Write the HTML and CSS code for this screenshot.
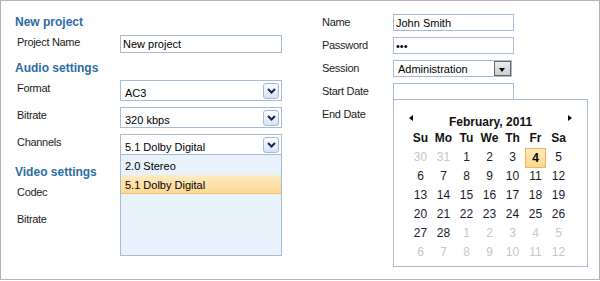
FILE: index.html
```html
<!DOCTYPE html>
<html lang="en">
<head>
    <meta charset="UTF-8">
    <title>New project</title>
    <link rel="stylesheet" href="styles.css">
</head>
<body>
    <div class="frame">
        <div class="form-left">
            <h2 class="group-title first">New project</h2>
            <div class="field field-input">
                <label for="projectName">Project Name</label>
                <input type="text" id="projectName" class="text-box" value="New project">
            </div>

            <h2 class="group-title audio">Audio settings</h2>
            <div class="field field-select">
                <label>Format</label>
                <div class="combo">AC3
                    <span class="combo-btn"><svg width="9" height="6" viewBox="0 0 9 6"><polyline points="1,1 4.5,4.5 8,1" fill="none" stroke="#1b2550" stroke-width="2"/></svg></span>
                </div>
            </div>
            <div class="field field-select">
                <label>Bitrate</label>
                <div class="combo">320 kbps
                    <span class="combo-btn"><svg width="9" height="6" viewBox="0 0 9 6"><polyline points="1,1 4.5,4.5 8,1" fill="none" stroke="#1b2550" stroke-width="2"/></svg></span>
                </div>
            </div>
            <div class="field field-select">
                <label>Channels</label>
                <div class="combo">5.1 Dolby Digital
                    <span class="combo-btn"><svg width="9" height="6" viewBox="0 0 9 6"><polyline points="1,1 4.5,4.5 8,1" fill="none" stroke="#1b2550" stroke-width="2"/></svg></span>
                    <ul class="combo-list">
                        <li>2.0 Stereo</li>
                        <li class="selected">5.1 Dolby Digital</li>
                    </ul>
                </div>
            </div>

            <h2 class="group-title video">Video settings</h2>
            <div class="field field-plain"><label>Codec</label></div>
            <div class="field field-plain"><label>Bitrate</label></div>
        </div>

        <div class="form-right">
            <div class="field field-small">
                <label for="name">Name</label>
                <input type="text" id="name" class="text-box small" value="John Smith">
            </div>
            <div class="field field-small">
                <label for="password">Password</label>
                <input type="password" id="password" class="text-box small" value="abc">
            </div>
            <div class="field field-small">
                <label>Session</label>
                <div class="combo-classic">Administration
                    <span class="classic-btn"><span class="arrow-down"></span></span>
                </div>
            </div>
            <div class="field field-small">
                <label for="startDate">Start Date</label>
                <input type="text" id="startDate" class="text-box small" value="">

                <div class="calendar">
                    <div class="cal-head">
                        <span class="arrow-left"></span>
                        <span class="cal-title">February, 2011</span>
                        <span class="arrow-right"></span>
                    </div>
                    <div class="cal-grid">
                        <b>Su</b><b>Mo</b><b>Tu</b><b>We</b><b>Th</b><b>Fr</b><b>Sa</b>
                        <span class="other">30</span><span class="other">31</span><span>1</span><span>2</span><span>3</span><span class="today">4</span><span>5</span>
                        <span>6</span><span>7</span><span>8</span><span>9</span><span>10</span><span>11</span><span>12</span>
                        <span>13</span><span>14</span><span>15</span><span>16</span><span>17</span><span>18</span><span>19</span>
                        <span>20</span><span>21</span><span>22</span><span>23</span><span>24</span><span>25</span><span>26</span>
                        <span>27</span><span>28</span><span class="other">1</span><span class="other">2</span><span class="other">3</span><span class="other">4</span><span class="other">5</span>
                        <span class="other">6</span><span class="other">7</span><span class="other">8</span><span class="other">9</span><span class="other">10</span><span class="other">11</span><span class="other">12</span>
                    </div>
                </div>
            </div>
            <div class="field field-small">
                <label>End Date</label>
            </div>
        </div>
    </div>
</body>
</html>
```

FILE: styles.css
```css
body {
    margin: 0;
    font-family: "Liberation Sans", Arial, sans-serif;
    font-size: 11px;
    color: #1c1c1c;
    background: #fff;
}
.frame {
    display: flex;
    width: 600px;
    height: 280px;
    box-sizing: border-box;
    border: 1px solid #b4b4b4;
    background: #fff;
}
.form-left {
    width: 267px;
    padding: 13px 0 0 14px;
}
.form-right {
    width: 192px;
    margin-left: 40px;
    padding-top: 13px;
}
.group-title {
    margin: 0;
    height: 16px;
    line-height: 16px;
    font-size: 12px;
    font-weight: bold;
    color: #2c6ca4;
}
.group-title.first {
    margin-bottom: 5px;
}
.group-title.audio {
    margin: 7px 0 4px;
}
.group-title.video {
    margin: 9px 0 5px;
}
.field {
    display: flex;
    align-items: flex-start;
    position: relative;
}
.field label {
    width: 103px;
    padding-left: 2px;
    line-height: 14px;
    letter-spacing: -0.3px;
}
.field-input {
    height: 18px;
}
.field-select {
    height: 21px;
    margin-bottom: 6px;
}
.field-select label {
    padding-top: 1px;
}
.field-plain {
    height: 14px;
}
.field-plain + .field-plain {
    margin-top: 13px;
}
.field-small {
    height: 17px;
    margin-bottom: 6px;
}
.field-small label {
    width: 71px;
    padding: 1px 0 0;
}
.text-box {
    box-sizing: border-box;
    width: 162px;
    height: 18px;
    margin: 0;
    padding: 0 2px;
    border: 1px solid #a5bcd4;
    font-family: "Liberation Sans", Arial, sans-serif;
    font-size: 11px;
    color: #000;
    outline: none;
}
.text-box.small {
    width: 121px;
    height: 17px;
}
.combo {
    position: relative;
    box-sizing: border-box;
    width: 162px;
    height: 21px;
    padding: 5px 0 0 4px;
    line-height: 14px;
    border: 1px solid #a5bcd4;
    background: #fff;
    color: #000;
}
.combo-btn {
    position: absolute;
    right: 2px;
    top: 2px;
    width: 16px;
    height: 16px;
    box-sizing: border-box;
    border: 1px solid #a3b9d8;
    border-radius: 3px;
    background: linear-gradient(#fbfdff, #d6e3f4);
    display: flex;
    align-items: center;
    justify-content: center;
}
.combo-list {
    position: absolute;
    left: -1px;
    top: 19px;
    z-index: 2;
    width: 162px;
    height: 102px;
    box-sizing: border-box;
    margin: 0;
    padding: 1px 0 0;
    list-style: none;
    border: 1px solid #a5bcd4;
    background: #e9f1fb;
}
.combo-list li {
    height: 19px;
    line-height: 20px;
    padding-left: 4px;
}
.combo-list li.selected {
    height: 18px;
    background: linear-gradient(#feebc0, #fcd993);
    border-bottom: 1px solid #f0c072;
}
.combo-classic {
    position: relative;
    box-sizing: border-box;
    width: 119px;
    height: 17px;
    padding: 1px 0 0 4px;
    line-height: 14px;
    border: 1px solid #a5bcd4;
    color: #000;
}
.classic-btn {
    position: absolute;
    right: 0;
    top: 0;
    width: 17px;
    height: 15px;
    box-sizing: border-box;
    border: 1px solid #666;
    background: linear-gradient(#ececec, #cfcfcf);
}
.arrow-down {
    position: absolute;
    left: 4px;
    top: 6px;
    border-left: 3.5px solid transparent;
    border-right: 3.5px solid transparent;
    border-top: 4px solid #000;
}
.calendar {
    position: absolute;
    left: 71px;
    top: 16px;
    z-index: 3;
    width: 195px;
    height: 168px;
    box-sizing: border-box;
    padding-top: 9px;
    border: 1px solid #a9bacb;
    background: #fff;
    font-size: 12px;
}
.cal-head {
    display: flex;
    align-items: flex-start;
    justify-content: space-between;
    height: 20px;
    margin: 0 15px;
}
.cal-title {
    margin-top: 5px;
    line-height: 16px;
    font-weight: bold;
    color: #111;
}
.arrow-left,
.arrow-right {
    margin-top: 6px;
    border-top: 3.5px solid transparent;
    border-bottom: 3.5px solid transparent;
}
.arrow-left {
    border-right: 4px solid #000;
}
.arrow-right {
    border-left: 4px solid #000;
}
.cal-grid {
    display: grid;
    grid-template-columns: repeat(7, 23px);
    grid-auto-rows: 19px;
    margin: 0 15px;
    line-height: 19px;
    text-align: center;
    color: #1a1a2e;
}
.cal-grid b {
    color: #111;
}
.cal-grid .other {
    color: #c8c6c8;
}
.cal-grid .today {
    box-sizing: border-box;
    height: 20px;
    margin: 0 1px;
    line-height: 18px;
    font-weight: bold;
    border: 1px solid #f0b55e;
    background: linear-gradient(#fee9bb, #fdd68c);
    color: #000;
}
```
